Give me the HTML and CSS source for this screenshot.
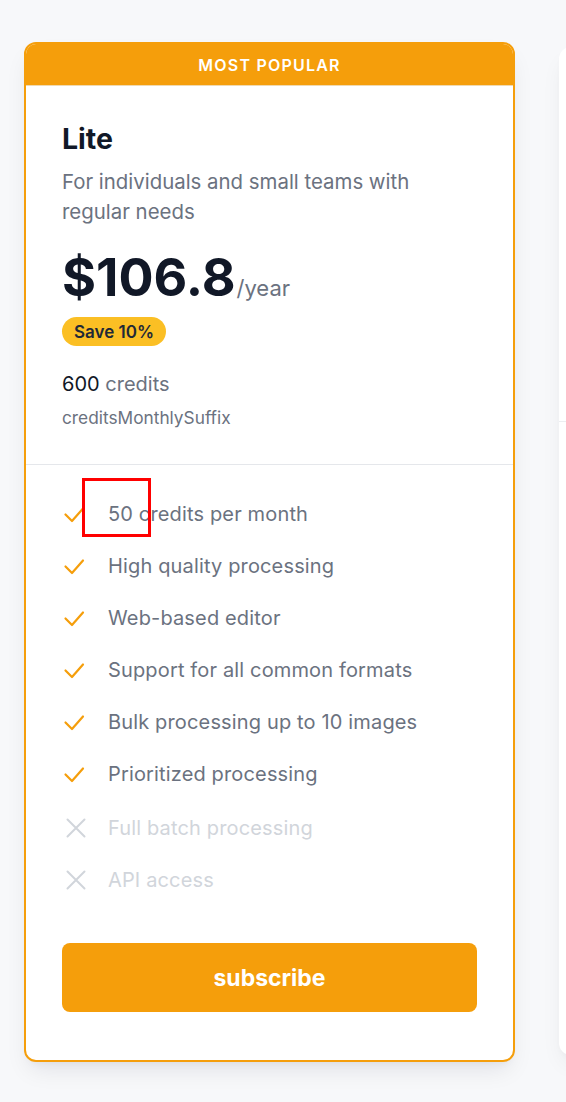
FILE: index.html
```html
<!DOCTYPE html>
<html lang="en">
<head>
<meta charset="utf-8">
<title>Pricing</title>
<link rel="stylesheet" href="styles.css">
</head>
<body>
<div class="plans">
  <div class="card popular">
    <div class="ribbon">MOST POPULAR</div>
    <div class="top">
      <h2 class="name">Lite</h2>
      <p class="desc">For individuals and small teams with regular needs</p>
      <div class="price"><span class="amount">$106.8</span><span class="period">/year</span></div>
      <span class="save">Save 10%</span>
      <p class="credits"><span class="num">600</span> credits</p>
      <p class="suffix">creditsMonthlySuffix</p>
    </div>
    <div class="bottom">
      <ul class="features">
        <li class="feat"><svg class="ico" viewBox="0 0 26 26"><path d="M5.5 13.5l6.5 6.5 11-12.5" class="chk"/></svg><span>50 credits per month</span><span class="mark"></span></li>
        <li class="feat"><svg class="ico" viewBox="0 0 26 26"><path d="M5.5 13.5l6.5 6.5 11-12.5" class="chk"/></svg><span>High quality processing</span></li>
        <li class="feat"><svg class="ico" viewBox="0 0 26 26"><path d="M5.5 13.5l6.5 6.5 11-12.5" class="chk"/></svg><span>Web-based editor</span></li>
        <li class="feat"><svg class="ico" viewBox="0 0 26 26"><path d="M5.5 13.5l6.5 6.5 11-12.5" class="chk"/></svg><span>Support for all common formats</span></li>
        <li class="feat"><svg class="ico" viewBox="0 0 26 26"><path d="M5.5 13.5l6.5 6.5 11-12.5" class="chk"/></svg><span>Bulk processing up to 10 images</span></li>
        <li class="feat"><svg class="ico" viewBox="0 0 26 26"><path d="M5.5 13.5l6.5 6.5 11-12.5" class="chk"/></svg><span>Prioritized processing</span></li>
        <li class="feat off first-off"><svg class="ico" viewBox="0 0 26 26"><path d="M7.5 4.5l17 17M24.5 4.5l-17 17" class="x"/></svg><span>Full batch processing</span></li>
        <li class="feat off"><svg class="ico" viewBox="0 0 26 26"><path d="M7.5 4.5l17 17M24.5 4.5l-17 17" class="x"/></svg><span>API access</span></li>
      </ul>
      <button class="subscribe">subscribe</button>
    </div>
  </div>
  <div class="card next">
    <div class="next-top"></div>
  </div>
</div>
</body>
</html>
```
FILE: styles.css
```css
* { box-sizing: border-box; }
html, body { margin: 0; padding: 0; }
body {
  background: #f7f8fa;
  font-family: "Inter", "Noto Sans", sans-serif;
  overflow: hidden;
  width: 566px;
  height: 1102px;
}
.plans {
  display: flex;
  align-items: flex-start;
  gap: 44px;
  width: 566px;
  height: 1102px;
  overflow: hidden;
  padding: 42px 0 0 24px;
}
.card {
  flex: 0 0 491px;
  background: #fff;
  border-radius: 12px;
}
.popular {
  border: 2px solid #f59e0b;
  overflow: hidden;
  box-shadow: 0 12px 24px -6px rgba(17, 24, 39, 0.10), 0 6px 10px -6px rgba(17, 24, 39, 0.06);
}
.ribbon {
  height: 42px;
  background: #f59e0b;
  color: #fff;
  display: flex;
  align-items: center;
  justify-content: center;
  font-size: 16px;
  font-weight: 600;
  letter-spacing: 1.2px;
  border-bottom: 1px solid #f0d9b0;
}
.top {
  padding: 35px 36px 35px 36px;
  border-bottom: 1px solid #e5e7eb;
}
.name {
  margin: 0;
  font-size: 28.5px;
  line-height: 36px;
  font-weight: 700;
  color: #111827;
}
.desc {
  margin: 10px 0 0;
  font-size: 20.4px;
  line-height: 30px;
  color: #6b7280;
}
.price {
  margin-top: 27px;
  display: flex;
  align-items: baseline;
}
.amount {
  font-size: 52px;
  line-height: 48px;
  font-weight: 700;
  color: #111827;
}
.period {
  font-size: 22px;
  color: #6b7280;
  margin-left: 1px;
}
.save {
  display: inline-flex;
  align-items: center;
  height: 29px;
  margin-top: 15px;
  padding: 0 12px;
  border-radius: 999px;
  background: #fbbf24;
  color: #1f2937;
  font-size: 17px;
  font-weight: 600;
}
.credits {
  margin: 24px 0 0;
  font-size: 20px;
  line-height: 28px;
  color: #6b7280;
}
.num { color: #111827; }
.suffix {
  margin: 9px 0 0;
  font-size: 17.3px;
  line-height: 22px;
  color: #6b7280;
}
.bottom {
  padding: 36px 36px 48px;
}
.features {
  list-style: none;
  margin: 0;
  padding: 0;
  display: flex;
  flex-direction: column;
  gap: 26px;
}
.feat {
  position: relative;
  display: flex;
  align-items: center;
  gap: 22px;
  height: 26px;
  font-size: 20px;
  letter-spacing: 0.15px;
  color: #6b7280;
}
.feat.off { color: #d1d5db; }
.first-off { margin-top: 2px; }
.ico {
  width: 26px;
  height: 26px;
  flex: 0 0 26px;
  margin-left: -2px;
  overflow: visible;
}
.chk {
  fill: none;
  stroke: #f59e0b;
  stroke-width: 2.2;
  stroke-linecap: round;
  stroke-linejoin: round;
}
.x {
  fill: none;
  stroke: #d1d5db;
  stroke-width: 2;
  stroke-linecap: round;
}
.mark {
  position: absolute;
  left: 20px;
  top: -23px;
  width: 69px;
  height: 59px;
  border: 3px solid #ff0000;
}
.subscribe {
  display: block;
  width: 100%;
  height: 69px;
  margin-top: 50px;
  border: 0;
  border-radius: 8px;
  background: #f59e0b;
  color: #fff;
  font-family: "Inter", "Noto Sans", sans-serif;
  font-size: 23px;
  font-weight: 700;
  cursor: pointer;
}
.next {
  margin-top: 5px;
  height: 1008px;
  box-shadow: 0 12px 24px -6px rgba(17, 24, 39, 0.08), 0 4px 8px -4px rgba(17, 24, 39, 0.05);
}
.next-top {
  height: 375px;
  border-bottom: 1px solid #eceef1;
}
```
